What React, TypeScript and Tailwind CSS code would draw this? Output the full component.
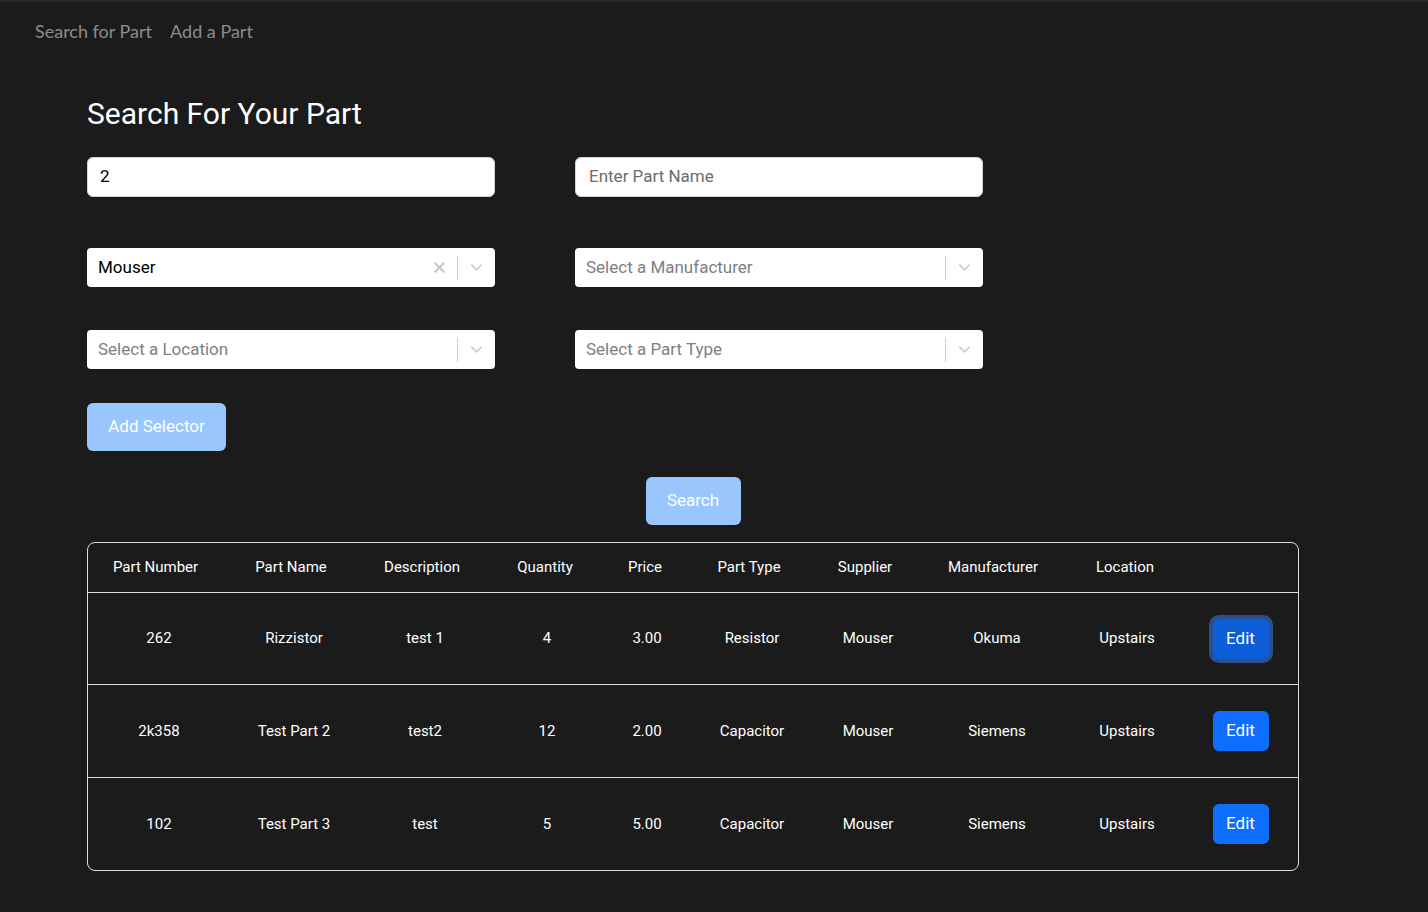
import { ChevronDown, X } from "lucide-react";

const parts = [
  { number: "262", name: "Rizzistor", desc: "test 1", qty: "4", price: "3.00", type: "Resistor", supplier: "Mouser", maker: "Okuma", location: "Upstairs" },
  { number: "2k358", name: "Test Part 2", desc: "test2", qty: "12", price: "2.00", type: "Capacitor", supplier: "Mouser", maker: "Siemens", location: "Upstairs" },
  { number: "102", name: "Test Part 3", desc: "test", qty: "5", price: "5.00", type: "Capacitor", supplier: "Mouser", maker: "Siemens", location: "Upstairs" },
];

// header label + padding that nudges it inside its column
const headers = [
  { label: "Part Number", cls: "" },
  { label: "Part Name", cls: "pl-[2px]" },
  { label: "Description", cls: "pl-[3px]" },
  { label: "Quantity", cls: "pl-[11px]" },
  { label: "Price", cls: "pr-[2px]" },
  { label: "Part Type", cls: "pr-[6px]" },
  { label: "Supplier", cls: "pr-[6px]" },
  { label: "Manufacturer", cls: "pr-[2px]" },
  { label: "Location", cls: "pl-[8px]" },
  { label: "", cls: "" },
];

const bodyPad = ["pl-[7px]", "pl-[8px]", "pl-[9px]", "pl-[15px]", "pl-[2px]", "", "", "pl-[6px]", "pl-[12px]"];

const cols = "grid grid-cols-[135px_134px_127px_111px_102px_110px_122px_130px_124px_115px]";

const Select = ({ value, placeholder }: { value?: string; placeholder: string }) => (
  <div className="flex h-[39px] w-[408px] items-center rounded bg-white">
    <div className={`flex-1 pl-[11px] text-[17px] ${value ? "text-black" : "text-[#808080]"}`}>
      {value || placeholder}
    </div>
    {value && (
      <div className="flex h-full w-[36px] items-center justify-center text-[#c4c4c4]">
        <X size={17} strokeWidth={2.6} />
      </div>
    )}
    <span className="h-[24px] w-px bg-[#ccc]" />
    <div className="flex h-full w-[37px] items-center justify-center text-[#ccc]">
      <ChevronDown size={19} strokeWidth={2} />
    </div>
  </div>
);

export default function App() {
  return (
    <div className="min-h-[912px] bg-[#1b1b1b] font-['Roboto',sans-serif] text-white">
      <div className="h-[2px] bg-[#23272b]" />
      <nav className="flex gap-[18px] pl-[35px] pt-[16px] font-['Lato',sans-serif] text-[18px] text-[#8c8c8c]">
        <span>Search for Part</span>
        <span>Add a Part</span>
      </nav>

      <div className="ml-[87px] w-[1212px]">
        <h1 className="mt-[51px] text-[30px] leading-[36px]">Search For Your Part</h1>

        <div className="mt-[25px] flex gap-[80px]">
          <div className="flex h-[40px] w-[408px] items-center rounded-md border border-[#ced4da] bg-white px-3 text-[17px] text-black">
            2
          </div>
          <div className="flex h-[40px] w-[408px] items-center rounded-md border border-[#ced4da] bg-white px-[13px] text-[17px] text-[#6c6c6c]">
            Enter Part Name
          </div>
        </div>

        <div className="mt-[51px] flex gap-[80px]">
          <Select value="Mouser" placeholder="Select a Supplier" />
          <Select placeholder="Select a Manufacturer" />
        </div>

        <div className="mt-[43px] flex gap-[80px]">
          <Select placeholder="Select a Location" />
          <Select placeholder="Select a Part Type" />
        </div>

        <button className="mt-[34px] h-[48px] w-[139px] rounded-md bg-[#9ac6fe] text-[17px] text-white">
          Add Selector
        </button>

        <div className="mt-[26px] flex justify-center">
          <button className="h-[48px] w-[95px] rounded-md bg-[#9ac6fe] text-[17px] text-white">Search</button>
        </div>

        <div className="mt-[17px] overflow-hidden rounded-lg border border-[#dedede] text-[15px]">
          <div className={`${cols} h-[50px] items-center border-b border-[#dedede] text-center`}>
            {headers.map((h, i) => (
              <div key={i} className={h.cls}>{h.label}</div>
            ))}
          </div>
          {parts.map((p, i) => {
            const cells = [p.number, p.name, p.desc, p.qty, p.price, p.type, p.supplier, p.maker, p.location];
            return (
              <div
                key={p.number}
                className={`${cols} items-center text-center ${i === 1 ? "h-[93px]" : "h-[92px]"} ${
                  i < parts.length - 1 ? "border-b border-[#dedede]" : ""
                }`}
              >
                {cells.map((c, j) => (
                  <div key={j} className={bodyPad[j]}>{c}</div>
                ))}
                <div className="flex justify-center">
                  <button
                    className={`h-[40px] w-[56px] rounded-md text-[17px] text-white ${
                      i === 0 ? "bg-[#0b5ed7] ring-4 ring-[#2b4f8c]" : "bg-[#0d6efd]"
                    }`}
                  >
                    Edit
                  </button>
                </div>
              </div>
            );
          })}
        </div>
      </div>
    </div>
  );
}
